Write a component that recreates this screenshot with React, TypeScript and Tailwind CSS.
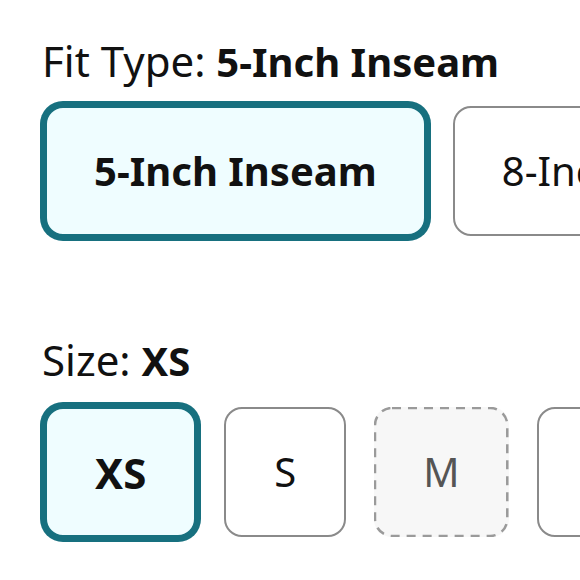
import { useState } from 'react';

const fits = ['5-Inch Inseam', '8-Inch Inseam'];
const sizes = [
  { label: 'XS', available: true },
  { label: 'S', available: true },
  { label: 'M', available: false },
  { label: 'L', available: true },
];

export default function App() {
  const [fit, setFit] = useState(fits[0]);
  const [size, setSize] = useState('XS');

  return (
    <div
      className="w-[580px] h-[580px] overflow-hidden bg-white text-[#111]"
      style={{ fontFamily: '"Noto Sans", "Liberation Sans", sans-serif' }}
    >
      <div className="pt-[37px] pl-[42px] text-[42px] leading-[48px] whitespace-nowrap">
        Fit Type: <span className="font-bold text-[40px]">{fit}</span>
      </div>
      <div className="flex gap-[27px] pl-[45px] mt-[20px]">
        {fits.map((f) => {
          const active = f === fit;
          return (
            <button
              key={f}
              onClick={() => setFit(f)}
              className={
                active
                  ? 'shrink-0 h-[130px] px-[47px] rounded-[18px] border-2 border-[#17707f] ring-[5px] ring-[#17707f] bg-[#effdff] text-[40px] font-bold whitespace-nowrap'
                  : 'shrink-0 h-[130px] px-[47px] rounded-[18px] border-2 border-[#8a8a8a] bg-white text-[40px] whitespace-nowrap'
              }
            >
              {f}
            </button>
          );
        })}
      </div>

      <div className="mt-[100px] pl-[42px] text-[42px] leading-[48px]">
        Size: <span className="font-bold text-[40px]">{size}</span>
      </div>
      <div className="flex gap-[28px] pl-[45px] mt-[22px]">
        {sizes.map((s) => {
          const active = s.label === size;
          let cls =
            'relative shrink-0 h-[130px] min-w-[122px] rounded-[18px] text-[40px] whitespace-nowrap ';
          if (active) cls += 'px-[48px] border-2 border-[#17707f] ring-[5px] ring-[#17707f] bg-[#effdff] font-bold text-[42px]';
          else if (!s.available) cls += 'px-[49px] bg-[#f7f7f7] text-[#555]';
          else cls += 'px-[48px] border-2 border-[#8a8a8a] bg-white';
          return (
            <button key={s.label} onClick={() => setSize(s.label)} className={cls}>
              {!s.available && (
                <svg className="absolute inset-0 w-full h-full" preserveAspectRatio="none">
                  <rect
                    x="1"
                    y="1"
                    width="calc(100% - 2px)"
                    height="calc(100% - 2px)"
                    rx="17"
                    fill="none"
                    stroke="#9a9a9a"
                    strokeWidth="2.5"
                    strokeDasharray="9 7"
                  />
                </svg>
              )}
              {s.label}
            </button>
          );
        })}
      </div>
    </div>
  );
}
